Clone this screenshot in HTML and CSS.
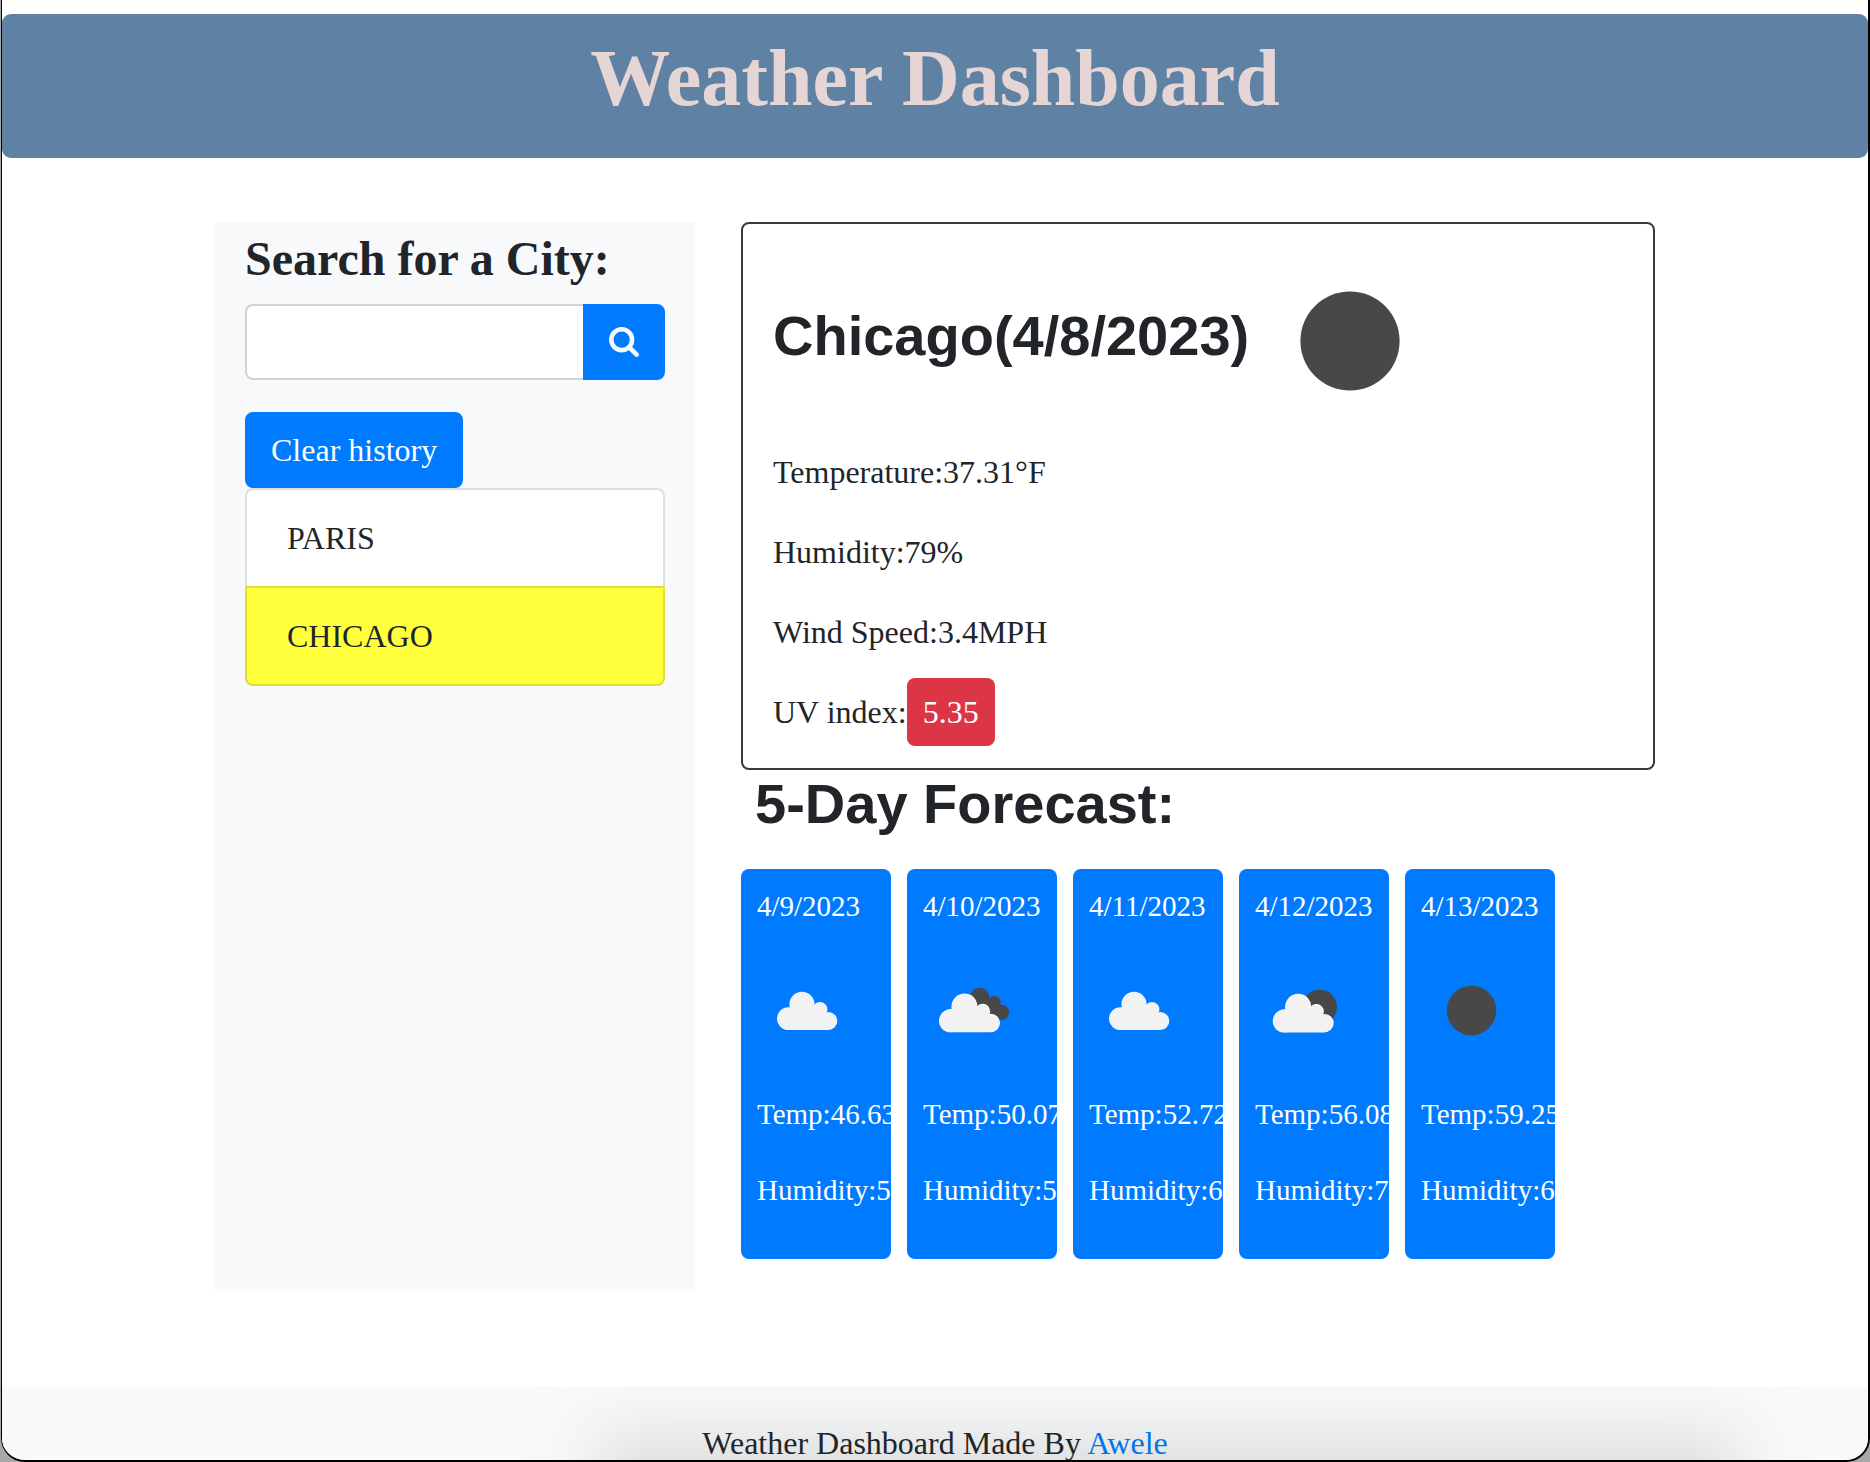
FILE: index.html
```html
<!DOCTYPE html>
<html lang="en">
<head>
<meta charset="utf-8">
<title>Weather Dashboard</title>
<link rel="stylesheet" href="styles.css">
</head>
<body>
<svg class="sprite" aria-hidden="true">
  <defs>
    <symbol id="cloud" viewBox="0 0 100 100">
      <circle cx="45" cy="44.3" r="12.6"/>
      <circle cx="31.4" cy="58.6" r="11.4"/>
      <circle cx="63" cy="49.4" r="7.4"/>
      <circle cx="71.3" cy="61" r="9"/>
      <path d="M31.4 70V54L40 46L62 48L70 56L71.3 70Z"/>
    </symbol>
    <symbol id="moon" viewBox="0 0 100 100">
      <circle cx="50.5" cy="50.5" r="24.8"/>
    </symbol>
  </defs>
</svg>
<div class="window">
  <header class="banner">
    <h1 class="banner-title">Weather Dashboard</h1>
  </header>

  <main class="container">
    <aside class="sidebar">
      <h2 class="search-title"><label for="search-city">Search for a City:</label></h2>
      <form class="search">
        <input class="search-input" id="search-city" type="text">
        <button class="btn search-btn" type="button" aria-label="Search">
          <svg class="search-icon" viewBox="0 0 1664 1664" aria-hidden="true"><path d="M1152 704q0-185-131.5-316.5t-316.5-131.5-316.5 131.5-131.5 316.5 131.5 316.5 316.5 131.5 316.5-131.5 131.5-316.5zm512 832q0 52-38 90t-90 38q-54 0-90-38l-343-342q-179 124-399 124-143 0-273.5-55.5t-225-150-150-225-55.5-273.5 55.5-273.5 150-225 225-150 273.5-55.5 273.5 55.5 225 150 150 225 55.5 273.5q0 220-124 399l343 343q37 37 37 90z"/></svg>
        </button>
      </form>
      <button class="btn clear-btn" type="button">Clear history</button>
      <ul class="history">
        <li class="history-item">PARIS</li>
        <li class="history-item history-item-active">CHICAGO</li>
      </ul>
    </aside>

    <div class="content">
      <section class="current">
        <h2 class="heading current-title">Chicago(4/8/2023)<svg class="current-icon" viewBox="0 0 100 100" aria-hidden="true"><use href="#moon" class="dark"/></svg></h2>
        <p class="reading">Temperature:37.31°F</p>
        <p class="reading">Humidity:79%</p>
        <p class="reading">Wind Speed:3.4MPH</p>
        <p class="reading">UV index:<span class="uv">5.35</span></p>
      </section>

      <section>
        <h2 class="heading forecast-title">5-Day Forecast:</h2>
        <div class="forecast">
          <article class="day">
            <p>4/9/2023</p>
            <svg class="day-icon" viewBox="0 0 100 100" aria-hidden="true"><use href="#cloud" class="light"/></svg>
            <p>Temp:46.63°F</p>
            <p>Humidity:54%</p>
          </article>
          <article class="day">
            <p>4/10/2023</p>
            <svg class="day-icon" viewBox="0 0 100 100" aria-hidden="true">
              <g class="dark">
                <circle cx="56.7" cy="37.4" r="9.6"/>
                <circle cx="71.3" cy="42.6" r="6.6"/>
                <circle cx="78.7" cy="52.3" r="7.6"/>
                <path d="M56 40L64 34L68 39L76 46L78.7 59.9L70 58L52 46Z"/>
              </g>
              <use href="#cloud" class="rim" x="-3.3" y="1.8" width="100" height="100"/>
              <use href="#cloud" class="light" x="-4" y="2.3" width="100" height="100"/>
            </svg>
            <p>Temp:50.07°F</p>
            <p>Humidity:51%</p>
          </article>
          <article class="day">
            <p>4/11/2023</p>
            <svg class="day-icon" viewBox="0 0 100 100" aria-hidden="true"><use href="#cloud" class="light"/></svg>
            <p>Temp:52.72°F</p>
            <p>Humidity:62%</p>
          </article>
          <article class="day">
            <p>4/12/2023</p>
            <svg class="day-icon" viewBox="0 0 100 100" aria-hidden="true">
              <circle class="dark" cx="64.7" cy="47" r="17.3"/>
              <use href="#cloud" class="rim" x="-1.6" y="2" width="100" height="100"/>
              <use href="#cloud" class="light" x="-2.3" y="2.5" width="100" height="100"/>
            </svg>
            <p>Temp:56.08°F</p>
            <p>Humidity:71%</p>
          </article>
          <article class="day">
            <p>4/13/2023</p>
            <svg class="day-icon" viewBox="0 0 100 100" aria-hidden="true"><use href="#moon" class="dark"/></svg>
            <p>Temp:59.25°F</p>
            <p>Humidity:69%</p>
          </article>
        </div>
      </section>
    </div>
  </main>

  <footer class="footer">
    <p class="footer-text">Weather Dashboard Made By <a href="#">Awele</a></p>
  </footer>
</div>
</body>
</html>
```
FILE: styles.css
```css
* {
  box-sizing: border-box;
}

body {
  margin: 0;
  background: #a8a8a8;
  color: #212529;
  font-family: "Liberation Serif", "Times New Roman", serif;
  font-size: 32px;
  line-height: 48px;
}

h1, h2, p, ul {
  margin: 0;
  padding: 0;
}

.sprite {
  position: absolute;
  width: 0;
  height: 0;
}

/* Window frame */
.window {
  display: flex;
  flex-direction: column;
  min-height: 100vh;
  margin-left: 1px;
  padding-top: 14px;
  overflow: hidden;
  background: #fff;
  border: solid #000;
  border-width: 0 2px 2px 1px;
  border-radius: 0 0 24px 24px;
}

.banner {
  padding: 16px 32px 32px;
  border-radius: 9px;
  background: #5f81a3;
  text-align: center;
}

.banner-title {
  color: #e6d5d5;
  font-size: 80px;
  line-height: 96px;
}

.container {
  display: flex;
  gap: 46px;
  width: 100%;
  max-width: 1440px;
  margin: 64px auto 96px;
}

/* Search column */
.sidebar {
  flex: 0 0 480px;
  min-width: 0;
  padding: 8px 30px 32px;
  background: #f8f9fb;
}

.search-title {
  margin-bottom: 16px;
  font-size: 48px;
  line-height: 58px;
}

.search {
  display: flex;
  margin-bottom: 32px;
}

.search-input {
  flex: 1;
  width: 100%;
  min-width: 0;
  height: 76px;
  padding: 12px 24px;
  border: 2px solid #ced4da;
  border-right: 0;
  border-radius: 8px 0 0 8px;
  background: #fff;
  color: #495057;
  font: inherit;
}

.btn {
  padding: 12px 24px;
  border: 2px solid #007bff;
  border-radius: 8px;
  background: #007bff;
  color: #fff;
  font: inherit;
}

.search-btn {
  display: flex;
  align-items: center;
  border-radius: 0 8px 8px 0;
}

.search-icon {
  width: 30px;
  height: 30px;
  fill: #f8f9fa;
}

.clear-btn {
  display: block;
}

.history {
  list-style: none;
}

.history-item {
  padding: 24px 40px;
  border: 2px solid #dfdfdf;
  border-bottom: 0;
  border-radius: 8px 8px 0 0;
  background: #fff;
}

.history-item-active {
  border: 2px solid #dfdf36;
  border-radius: 0 0 8px 8px;
  background: #ffff3c;
}

/* Current weather */
.content {
  flex: 1;
  min-width: 0;
}

.current {
  padding: 16px 30px 0;
  border: 2px solid #343a40;
  border-radius: 8px;
}

.heading {
  font-family: "Liberation Sans", Helvetica, Arial, sans-serif;
  font-size: 56px;
  line-height: 67px;
}

.current-title {
  margin-bottom: 8px;
}

.current-icon {
  width: 200px;
  height: 200px;
  vertical-align: middle;
}

.dark {
  fill: #48484a;
}

.light {
  fill: #f2f2f2;
}

.rim {
  fill: #fff;
}

.reading {
  margin-bottom: 32px;
}

.uv {
  padding: 16px;
  border-radius: 8px;
  background: #dc3545;
  color: #fff;
}

/* Forecast */
.forecast-title {
  margin-bottom: 32px;
  padding-left: 14px;
}

.forecast {
  display: flex;
  gap: 16px;
  margin-bottom: 32px;
}

.day {
  display: flex;
  flex-direction: column;
  gap: 32px;
  width: 150px;
  padding: 15px 16px 47px;
  overflow: hidden;
  border-radius: 8px;
  background: #007bff;
  color: #fff;
  font-size: 29px;
  line-height: 44px;
  white-space: nowrap;
}

.day-icon {
  width: 100px;
  height: 100px;
}

/* Footer, with a soft shade rising from the lower edge */
.footer {
  position: relative;
  flex: 1;
  padding-top: 40px;
  overflow: hidden;
  background: #f8f9fb;
  text-align: center;
}

.footer::before {
  content: "";
  position: absolute;
  top: 48px;
  right: 7%;
  bottom: -160px;
  left: 32%;
  background: #dcdddc;
  filter: blur(32px);
}

.footer-text {
  position: relative;
  line-height: 32px;
}

.footer a {
  color: #0074f0;
  text-decoration: none;
}
```
